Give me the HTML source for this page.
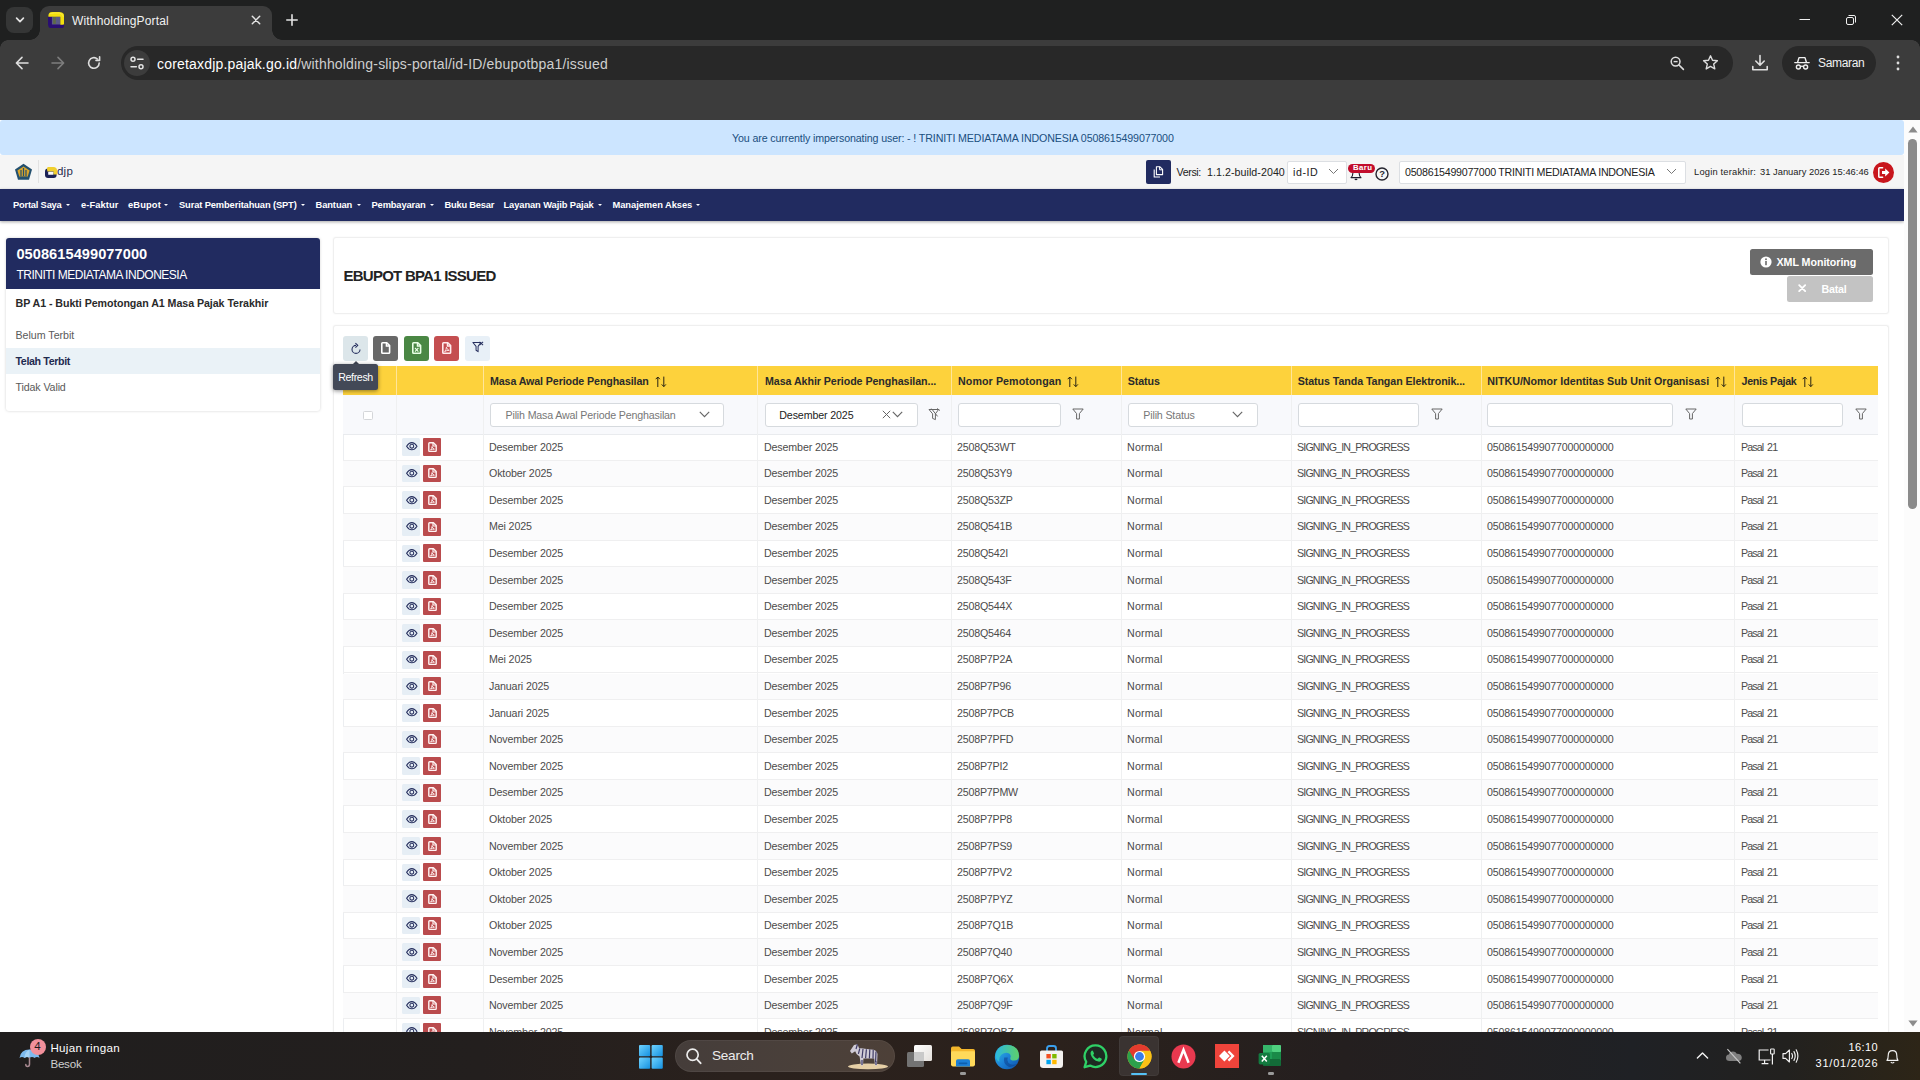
<!DOCTYPE html>
<html lang="id">
<head>
<meta charset="utf-8">
<title>WithholdingPortal</title>
<style>
*{box-sizing:border-box;margin:0;padding:0}
html,body{width:1920px;height:1080px;overflow:hidden;background:#fff}
body{font-family:"Liberation Sans",sans-serif;font-size:10.67px;color:#333;position:relative;-webkit-font-smoothing:antialiased}
.abs{position:absolute}
.t{position:absolute;white-space:nowrap;line-height:1}
svg{display:block}

/* ---------- browser chrome ---------- */
#tabstrip{left:0;top:0;width:1920px;height:40px;background:#1f2020}
#toolbar{left:0;top:40px;width:1920px;height:80px;background:#3c3c3c}
#tab{left:40px;top:6px;width:232px;height:34px;background:#3c3c3c;border-radius:9px 9px 0 0}
#tabl,#tabr{top:30px;width:10px;height:10px;background:radial-gradient(circle at 0 0,#1f2020 9.5px,#3c3c3c 10px)}
#tabl{left:30px}
#tabr{left:272px;background:radial-gradient(circle at 100% 0,#1f2020 9.5px,#3c3c3c 10px)}
#tabsearch{left:6px;top:7px;width:27px;height:26px;border-radius:8px;background:#353636}
#urlpill{left:121px;top:46px;width:1612px;height:34px;border-radius:17px;background:#282828}
#siteinfo{left:124px;top:50px;width:26px;height:26px;border-radius:13px;background:#3c3c3c}
#incog{left:1782px;top:46px;width:94px;height:34px;border-radius:17px;background:#282828}

/* ---------- page ---------- */
#page{left:0;top:120px;width:1904px;height:912px;background:#fff;overflow:hidden}
#vscroll{left:1904px;top:120px;width:16px;height:912px;background:#fcfcfc}
#banner{left:0;top:0;width:1904px;height:34.5px;background:#cce5ff;border-radius:3px}
#hdr{left:0;top:34.5px;width:1904px;height:34.5px;background:#f5f5f5}
#nav{left:0;top:68.8px;width:1904px;height:31.8px;background:#212b60;box-shadow:0 1px 3px rgba(0,0,0,.35)}
.nv{top:80.6px;color:#fff;font-size:9.33px;font-weight:bold}
.car{top:84px;width:0;height:0;border-left:2px solid transparent;border-right:2px solid transparent;border-top:2.4px solid #fff}

/* sidebar */
#side{left:6px;top:118px;width:314px;height:173px;background:#fff;border-radius:3px;box-shadow:0 0 3px rgba(0,0,0,.18)}
#sidehead{left:0;top:0;width:314px;height:50.7px;background:#212b60;border-radius:3px 3px 0 0}
#sidesel{left:0;top:110.2px;width:314px;height:26px;background:#eaf2f7}

/* main cards */
.card{background:#fff;border:1px solid #efefef;border-radius:3px;box-shadow:0 0 2px rgba(0,0,0,.06)}
#card1{left:333px;top:117px;width:1556px;height:77px}
#card2{left:333px;top:205px;width:1556px;height:760px;border-bottom:none}

/* table */
#thead{left:343px;top:246px;width:1535px;height:29.3px;background:#fdd23c}
#tfilter{left:343px;top:275.3px;width:1535px;height:39.3px;background:#f8f9fc;border-bottom:1px solid #e9ebee}
.vl{top:275px;width:1px;height:700px;background:#eff0f1}
.th{top:255.5px;font-size:10.67px;font-weight:bold;color:#2b2b2b}
.row{left:343px;width:1535px;height:26.59px;border-bottom:1px solid #efeff0}
.row.alt{background:#fbfbfc}
.c{position:absolute;top:7.5px;white-space:nowrap;line-height:1;font-size:10.67px;color:#4b4b4b}
.eb{left:59px;top:4px;width:18px;height:17.6px;background:#e6eef5;border-radius:1.5px}
.pb{left:80px;top:3.8px;width:18px;height:17.9px;background:#ba4b4d;border-radius:1px}
.ei{left:62.6px;top:8.2px;width:12px;height:9px}
.pi{left:84.6px;top:7.6px;width:9px;height:10.4px}
.inp{background:#fff;border:1px solid #d6dade;border-radius:3px;height:24px;top:283px}
.tb{top:216px;width:24.7px;height:24.7px;border-radius:3px}

.hl{top:246px;width:1px;height:29.3px;background:#ffe59a}
.srt{top:255.6px;width:12px;height:12px}
.chv{top:290.6px;width:11px;height:7px}
.fl{top:288px;width:12px;height:12px}
/* taskbar */
#taskbar{left:0;top:1032px;width:1920px;height:48px;background:linear-gradient(90deg,#201e1e 0%,#231f1e 25%,#2a211d 38%,#2b211c 55%,#241f1f 70%,#1f2125 85%,#22211f 93%,#2d2517 100%)}
</style>
</head>
<body>
<svg width="0" height="0" style="position:absolute"><defs>
<g id="sort"><path d="M2.8 11 V1 M0.7 3.2 L2.8 1 L4.9 3.2" fill="none" stroke="#2a2412" stroke-width="1"/><path d="M8.8 0.6 V10.6 M6.7 8.4 L8.8 10.6 L10.9 8.4" fill="none" stroke="#2a2412" stroke-width="1"/></g>
<g id="chev"><path d="M0.8 0.8 L5.5 5.6 L10.2 0.8" fill="none" stroke="#666" stroke-width="1.15"/></g>
<g id="funnel"><path d="M0.8 1 H11.2 L7.4 5.6 V11 H4.6 V5.6 Z" fill="none" stroke="#666" stroke-width="1" stroke-linejoin="round"/></g>
<g id="eye"><path d="M0.6 4.2 C2.4 1.4 4.4 0.6 5.8 0.6 C7.2 0.6 9.2 1.4 11 4.2 C9.2 7 7.2 7.8 5.8 7.8 C4.4 7.8 2.4 7 0.6 4.2 Z" fill="none" stroke="#27305f" stroke-width="1.05"/><circle cx="5.8" cy="4.2" r="1.9" fill="none" stroke="#27305f" stroke-width="1.05"/></g>
<g id="pdf"><path d="M1.6 0.8 H5.4 L8.2 3.6 V8.6 Q8.2 9.4 7.4 9.4 H1.6 Q0.8 9.4 0.8 8.6 V1.6 Q0.8 0.8 1.6 0.8 Z" fill="none" stroke="#fff3f3" stroke-width="1.4" stroke-linejoin="round"/><path d="M5 1 V4 H8" fill="none" stroke="#fff3f3" stroke-width="1.2"/><path d="M2.6 8 Q4 6.8 4 4.6 Q4.6 6.6 6.4 7.2 Q4.4 7 2.6 8" fill="none" stroke="#fff3f3" stroke-width="0.9"/></g>
</defs></svg>

<!-- ================= BROWSER CHROME ================= -->
<div id="tabstrip" class="abs"></div>
<div id="toolbar" class="abs"></div>
<div id="tabsearch" class="abs"></div>
<div class="abs" style="left:1912px;top:40px;width:8px;height:8px;background:radial-gradient(circle at 0 100%,#3c3c3c 7.5px,#1f2020 8px)"></div>
<div class="abs" style="left:0;top:40px;width:8px;height:8px;background:radial-gradient(circle at 100% 100%,#3c3c3c 7.5px,#1f2020 8px)"></div>
<div id="tabl" class="abs"></div><div id="tab" class="abs"></div><div id="tabr" class="abs"></div>
<div id="urlpill" class="abs"></div>
<div id="siteinfo" class="abs"></div>
<div id="incog" class="abs"></div>
<!-- tab search chevron -->
<svg class="abs" style="left:14px;top:14px" width="12" height="12" viewBox="0 0 12 12"><path d="M2.6 4.2 L6 7.6 L9.4 4.2" fill="none" stroke="#e3e3e3" stroke-width="1.7" stroke-linecap="round" stroke-linejoin="round"/></svg>
<!-- favicon -->
<svg class="abs" style="left:48px;top:11.6px" width="16.4" height="16.4" viewBox="0 0 16 16"><path d="M0 4 H16 V12 Q16 16 12 16 H4 Q0 16 0 12 Z" fill="#2a0e72"/><rect x="3.8" y="4.6" width="8" height="7.6" fill="#5b5a86"/><rect x="5" y="4.6" width="2.6" height="7" fill="#5f6b45"/><path d="M0.4 4.6 Q0 0 4 0 H11 Q16 0 16 5 V11 Q16 12.4 14.6 12.4 H12 V4.6 Z" fill="#f2e00e"/><path d="M2 1.6 Q6 0.6 11 1 Q14.6 1.4 15 5" fill="none" stroke="#fff27a" stroke-width=".8" opacity=".6"/></svg>
<div class="t" style="left:72px;top:15px;font-size:12px;color:#f1f1f1;letter-spacing:0.171px">WithholdingPortal</div>
<!-- tab close -->
<svg class="abs" style="left:251px;top:15px" width="10" height="10" viewBox="0 0 10 10"><path d="M1.3 1.3 L8.7 8.7 M8.7 1.3 L1.3 8.7" stroke="#e3e3e3" stroke-width="1.5" stroke-linecap="round"/></svg>
<!-- new tab plus -->
<svg class="abs" style="left:286px;top:14px" width="12" height="12" viewBox="0 0 12 12"><path d="M6 0.8 V11.2 M0.8 6 H11.2" stroke="#e3e3e3" stroke-width="1.6" stroke-linecap="round"/></svg>
<!-- window controls -->
<svg class="abs" style="left:1799px;top:14px" width="12" height="12" viewBox="0 0 12 12"><path d="M0.5 5.5 H11" stroke="#f0f0f0" stroke-width="1"/></svg>
<svg class="abs" style="left:1845px;top:14px" width="12" height="12" viewBox="0 0 12 12"><rect x="1.5" y="3.5" width="7" height="7" rx="1.5" fill="none" stroke="#f0f0f0" stroke-width="1"/><path d="M3.5 1.5 H9 Q10.5 1.5 10.5 3 V8.5" fill="none" stroke="#f0f0f0" stroke-width="1"/></svg>
<svg class="abs" style="left:1891px;top:14px" width="12" height="12" viewBox="0 0 12 12"><path d="M0.8 0.8 L11.2 11.2 M11.2 0.8 L0.8 11.2" stroke="#f0f0f0" stroke-width="1.2"/></svg>
<!-- back / forward / reload -->
<svg class="abs" style="left:14px;top:55px" width="16" height="16" viewBox="0 0 16 16"><path d="M14 8 H2.6 M8 2.4 L2.4 8 L8 13.6" fill="none" stroke="#dedede" stroke-width="1.6" stroke-linecap="round" stroke-linejoin="round"/></svg>
<svg class="abs" style="left:50px;top:55px" width="16" height="16" viewBox="0 0 16 16"><path d="M2 8 H13.4 M8 2.4 L13.6 8 L8 13.6" fill="none" stroke="#7d7d7d" stroke-width="1.6" stroke-linecap="round" stroke-linejoin="round"/></svg>
<svg class="abs" style="left:86px;top:55px" width="16" height="16" viewBox="0 0 16 16"><path d="M13.2 8 A5.3 5.3 0 1 1 11.4 4" fill="none" stroke="#dedede" stroke-width="1.6" stroke-linecap="round"/><path d="M13.6 1.8 V5.4 H10" fill="none" stroke="#dedede" stroke-width="1.6" stroke-linecap="round" stroke-linejoin="round"/></svg>
<!-- site info (tune) -->
<svg class="abs" style="left:129px;top:55px" width="16" height="16" viewBox="0 0 16 16"><circle cx="4" cy="4.3" r="2" fill="none" stroke="#e3e3e3" stroke-width="1.5"/><path d="M8.6 4.3 H14" stroke="#e3e3e3" stroke-width="1.5" stroke-linecap="round"/><circle cx="12" cy="11.7" r="2" fill="none" stroke="#e3e3e3" stroke-width="1.5"/><path d="M2 11.7 H7.4" stroke="#e3e3e3" stroke-width="1.5" stroke-linecap="round"/></svg>
<div class="t" id="url" style="left:157px;top:56.5px;font-size:14px;color:#cfcfcf;letter-spacing:0.181px"><span style="color:#fff">coretaxdjp.pajak.go.id</span>/withholding-slips-portal/id-ID/ebupotbpa1/issued</div>
<!-- zoom -->
<svg class="abs" style="left:1669px;top:55px" width="16" height="16" viewBox="0 0 16 16"><circle cx="6.6" cy="6.6" r="4.4" fill="none" stroke="#dedede" stroke-width="1.5"/><path d="M10 10 L14.4 14.4" stroke="#dedede" stroke-width="1.6" stroke-linecap="round"/><path d="M4.6 6.6 H8.6" stroke="#dedede" stroke-width="1.4"/></svg>
<!-- star -->
<svg class="abs" style="left:1702px;top:54px" width="17" height="17" viewBox="0 0 17 17"><path d="M8.5 1.8 L10.5 6.3 L15.4 6.8 L11.7 10.1 L12.8 14.9 L8.5 12.4 L4.2 14.9 L5.3 10.1 L1.6 6.8 L6.5 6.3 Z" fill="none" stroke="#dedede" stroke-width="1.4" stroke-linejoin="round"/></svg>
<!-- download -->
<svg class="abs" style="left:1751px;top:54px" width="18" height="18" viewBox="0 0 18 18"><path d="M9 1.5 V11 M4.8 7 L9 11.2 L13.2 7" fill="none" stroke="#dedede" stroke-width="1.6" stroke-linecap="round" stroke-linejoin="round"/><path d="M1.8 12.5 V15.8 H16.2 V12.5" fill="none" stroke="#dedede" stroke-width="1.6" stroke-linejoin="round" stroke-linecap="round"/></svg>
<!-- incognito -->
<svg class="abs" style="left:1794px;top:55px" width="16" height="16" viewBox="0 0 16 16"><path d="M0.8 7.6 H15.2" stroke="#f0f0f0" stroke-width="1.4" stroke-linecap="round"/><path d="M3.6 7.2 L5 2.6 H11 L12.4 7.2" fill="none" stroke="#f0f0f0" stroke-width="1.4" stroke-linejoin="round"/><circle cx="4.4" cy="12" r="2" fill="none" stroke="#f0f0f0" stroke-width="1.4"/><circle cx="11.6" cy="12" r="2" fill="none" stroke="#f0f0f0" stroke-width="1.4"/><path d="M6.4 11.6 Q8 10.6 9.6 11.6" fill="none" stroke="#f0f0f0" stroke-width="1.3"/></svg>
<div class="t" style="left:1818px;top:56.5px;font-size:12px;color:#f1f1f1;letter-spacing:-0.317px">Samaran</div>
<!-- menu dots -->
<svg class="abs" style="left:1895px;top:54px" width="6" height="18" viewBox="0 0 6 18"><circle cx="3" cy="3" r="1.4" fill="#dedede"/><circle cx="3" cy="9" r="1.4" fill="#dedede"/><circle cx="3" cy="15" r="1.4" fill="#dedede"/></svg>


<!-- ================= PAGE ================= -->
<div id="page" class="abs">
<div id="banner" class="abs"></div>
<div id="hdr" class="abs"></div>
<div id="nav" class="abs"></div>
<div class="t" style="left:732px;top:12.5px;font-size:10.67px;color:#1a4f80;letter-spacing:-0.121px">You are currently impersonating user: - ! TRINITI MEDIATAMA INDONESIA 0508615499077000</div>
<!-- kemenkeu logo -->
<svg class="abs" style="left:14px;top:43px" width="19" height="18" viewBox="0 0 19 18"><path d="M9.5 0.8 L18 6.6 L15 16.8 H4 L1 6.6 Z" fill="#23506f"/><path d="M9.5 3.4 L15.6 7.5 L13.4 14.6 H5.6 L3.4 7.5 Z" fill="#d9a52c"/><path d="M9.5 5 V13 M7 7 V13 M12 7 V13" stroke="#23506f" stroke-width="1.2"/><rect x="5.4" y="13.4" width="8.2" height="1.6" fill="#23506f"/></svg>
<div class="abs" style="left:38px;top:40px;width:1px;height:23px;background:#e2e2e2"></div>
<!-- djp logo -->
<svg class="abs" style="left:44.8px;top:46.8px" width="12" height="11" viewBox="0 0 12 11"><rect x="0" y="1.4" width="11.6" height="9.6" rx="3" fill="#1b2256"/><path d="M2.6 0 H8.4 Q12 0 12 3.6 V7.6 H8.4 V4.6 H2.4 Q1.4 2 2.6 0 Z" fill="#f0cf2e"/><rect x="3.2" y="4.7" width="5.1" height="3.1" rx=".6" fill="#fbfbfb"/></svg>
<div class="t" style="left:57px;top:46px;font-size:11.5px;color:#272b50;letter-spacing:0.220px">djp</div>
<!-- right side -->
<div class="abs" style="left:1146px;top:40px;width:25px;height:23.5px;border-radius:2px;background:#212b60"></div>
<svg class="abs" style="left:1153px;top:46px" width="11" height="12" viewBox="0 0 11 12"><path d="M3.4 0.8 H7 L9.6 3.4 V8.6 H3.4 Z" fill="none" stroke="#fff" stroke-width="1.1" stroke-linejoin="round"/><path d="M6.6 0.8 V3.8 H9.6" fill="none" stroke="#fff" stroke-width="1"/><path d="M1.2 3.6 V11 H7" fill="none" stroke="#fff" stroke-width="1.1" stroke-linejoin="round"/></svg>
<div class="t" style="left:1176.5px;top:46.5px;font-size:10.67px;color:#222;letter-spacing:-0.371px">Versi:</div>
<div class="t" style="left:1207px;top:46.5px;font-size:10.67px;color:#222;letter-spacing:0.051px">1.1.2-build-2040</div>
<div class="abs" style="left:1287px;top:40.5px;width:60px;height:23px;border:1px solid #dcdfe3;border-radius:2px;background:#fff"></div>
<div class="t" style="left:1293px;top:46.5px;font-size:10.67px;color:#222;letter-spacing:0.575px">id-ID</div>
<svg class="abs" style="left:1328px;top:48px" width="11" height="7" viewBox="0 0 11 7"><path d="M1 1 L5.5 5.5 L10 1" fill="none" stroke="#777" stroke-width="1"/></svg>
<!-- bell + badge -->
<svg class="abs" style="left:1350.4px;top:48px" width="12" height="13" viewBox="0 0 12 13"><path d="M1 9.6 Q2.8 8 2.8 5.5 Q2.8 2.6 6 2.6 Q9.2 2.6 9.2 5.5 Q9.2 8 11 9.6 Z" fill="none" stroke="#1d1d2c" stroke-width="1.1" stroke-linejoin="round"/><path d="M4.8 11 Q6 12.2 7.2 11" fill="none" stroke="#1d1d2c" stroke-width="1.1"/></svg>
<div class="abs" style="left:1348.3px;top:43.8px;width:26.8px;height:9.4px;border-radius:4.7px;background:#c20d2c"></div>
<div class="t" style="left:1353px;top:44px;font-size:7.8px;font-weight:bold;color:#fff;letter-spacing:0.411px">Baru</div>
<svg class="abs" style="left:1375px;top:46.7px" width="14" height="14" viewBox="0 0 14 14"><circle cx="7" cy="7" r="6" fill="none" stroke="#25252f" stroke-width="1.4"/></svg>
<div class="t" style="left:1379.3px;top:49px;font-size:9.4px;font-weight:bold;color:#25252f">?</div>
<div class="abs" style="left:1399px;top:40.5px;width:287px;height:23px;border:1px solid #dcdfe3;border-radius:2px;background:#fff"></div>
<div class="t" style="left:1405px;top:46.5px;font-size:10.67px;color:#222;letter-spacing:-0.251px">0508615499077000 TRINITI MEDIATAMA INDONESIA</div>
<svg class="abs" style="left:1666px;top:48px" width="11" height="7" viewBox="0 0 11 7"><path d="M1 1 L5.5 5.5 L10 1" fill="none" stroke="#777" stroke-width="1"/></svg>
<div class="t" style="left:1694px;top:47.5px;font-size:9.33px;color:#222;letter-spacing:0.191px">Login terakhir:</div>
<div class="t" style="left:1760px;top:47.5px;font-size:9.33px;color:#222;letter-spacing:0.017px">31 January 2026 15:46:46</div>
<div class="abs" style="left:1873px;top:41.5px;width:21px;height:21px;border-radius:50%;background:#c8161d"></div>
<svg class="abs" style="left:1878px;top:46.5px" width="12" height="11" viewBox="0 0 12 11"><path d="M4.6 0.8 H1.6 Q0.8 0.8 0.8 1.6 V9.4 Q0.8 10.2 1.6 10.2 H4.6" fill="none" stroke="#fff" stroke-width="1.5" stroke-linecap="round"/><path d="M4 4 H7.2 V1.6 L11.4 5.5 L7.2 9.4 V7 H4 Z" fill="#fff"/></svg>
<!-- nav -->
<div class="t nv" style="left:13px;letter-spacing:-0.203px">Portal Saya</div><div class="abs car" style="left:66px"></div>
<div class="t nv" style="left:81px;letter-spacing:0.070px">e-Faktur</div>
<div class="t nv" style="left:128px;letter-spacing:0.135px">eBupot</div><div class="abs car" style="left:164px"></div>
<div class="t nv" style="left:179px;letter-spacing:-0.124px">Surat Pemberitahuan (SPT)</div><div class="abs car" style="left:300.5px"></div>
<div class="t nv" style="left:315.5px;letter-spacing:-0.088px">Bantuan</div><div class="abs car" style="left:356.5px"></div>
<div class="t nv" style="left:371.5px;letter-spacing:-0.132px">Pembayaran</div><div class="abs car" style="left:430px"></div>
<div class="t nv" style="left:444.5px;letter-spacing:-0.227px">Buku Besar</div>
<div class="t nv" style="left:503.5px;letter-spacing:-0.091px">Layanan Wajib Pajak</div><div class="abs car" style="left:598px"></div>
<div class="t nv" style="left:612.5px;letter-spacing:-0.053px">Manajemen Akses</div><div class="abs car" style="left:696px"></div>

<div id="side" class="abs">
<div id="sidehead" class="abs"></div>
<div id="sidesel" class="abs"></div>
<div class="t" style="left:10.4px;top:9px;font-size:14.6px;font-weight:bold;color:#fff;letter-spacing:0.062px">0508615499077000</div>
<div class="t" style="left:10.4px;top:30.5px;font-size:12px;color:#fff;letter-spacing:-0.491px">TRINITI MEDIATAMA INDONESIA</div>
<div class="t" style="left:9.5px;top:59.7px;font-size:10.67px;font-weight:bold;color:#2a2a2a;letter-spacing:-0.053px">BP A1 - Bukti Pemotongan A1 Masa Pajak Terakhir</div>
<div class="t" style="left:9.5px;top:92px;font-size:10.67px;color:#5a5a5a;letter-spacing:-0.021px">Belum Terbit</div>
<div class="t" style="left:9.5px;top:118.3px;font-size:10.67px;font-weight:bold;color:#1f2a4f;letter-spacing:-0.365px">Telah Terbit</div>
<div class="t" style="left:9.5px;top:144px;font-size:10.67px;color:#5a5a5a;letter-spacing:-0.123px">Tidak Valid</div>
</div>

<div id="card1" class="abs card"></div>
<div id="card2" class="abs card"></div>
<div class="t" style="left:343.5px;top:147.6px;font-size:15px;font-weight:bold;color:#232323;letter-spacing:-0.753px">EBUPOT BPA1 ISSUED</div>
<!-- XML Monitoring / Batal -->
<div class="abs" style="left:1750px;top:129.3px;width:122.7px;height:25.4px;border-radius:2.5px;background:#6b6b6b"></div>
<svg class="abs" style="left:1759.5px;top:136.3px" width="12" height="12" viewBox="0 0 12 12"><circle cx="6" cy="6" r="5.6" fill="#fff"/><rect x="5.2" y="5" width="1.6" height="4.2" fill="#6b6b6b"/><circle cx="6" cy="3.3" r="0.95" fill="#6b6b6b"/></svg>
<div class="t" style="left:1776.5px;top:137px;font-size:10.67px;font-weight:bold;color:#fff;letter-spacing:-0.039px">XML Monitoring</div>
<div class="abs" style="left:1787.3px;top:156px;width:85.4px;height:26.2px;border-radius:2.5px;background:#c3c3c3"></div>
<svg class="abs" style="left:1798px;top:163.8px" width="8.4" height="8.4" viewBox="0 0 9 9"><path d="M1.3 1.3 L7.7 7.7 M7.7 1.3 L1.3 7.7" stroke="#fff" stroke-width="2" stroke-linecap="round"/></svg>
<div class="t" style="left:1821.5px;top:163.7px;font-size:10.67px;font-weight:bold;color:#fff;letter-spacing:-0.191px">Batal</div>

<!-- toolbar buttons -->
<div class="abs tb" style="left:343.1px;background:#dce6ea"></div>
<svg class="abs" style="left:349.6px;top:222px" width="12" height="13" viewBox="0 0 12 13"><path d="M10 7.4 A4 4 0 1 1 6 3.4" fill="none" stroke="#27305f" stroke-width="1.1"/><path d="M5.4 1.2 L7.8 3.4 L5.4 5.6" fill="none" stroke="#27305f" stroke-width="1.1" stroke-linejoin="round"/></svg>
<div class="abs tb" style="left:373.1px;background:#686868"></div>
<svg class="abs" style="left:380.6px;top:221.5px" width="10" height="12" viewBox="0 0 10 12"><path d="M1.6 0.8 H5.8 L8.6 3.6 V10.4 Q8.6 11.2 7.8 11.2 H1.6 Q0.8 11.2 0.8 10.4 V1.6 Q0.8 0.8 1.6 0.8 Z" fill="none" stroke="#fff" stroke-width="1.6" stroke-linejoin="round"/><path d="M5.4 1 V4 H8.4" fill="none" stroke="#fff" stroke-width="1.4"/></svg>
<div class="abs tb" style="left:404.2px;background:#4a8744"></div>
<svg class="abs" style="left:411.6px;top:221.5px" width="10" height="12" viewBox="0 0 10 12"><path d="M1.6 0.8 H5.8 L8.6 3.6 V10.4 Q8.6 11.2 7.8 11.2 H1.6 Q0.8 11.2 0.8 10.4 V1.6 Q0.8 0.8 1.6 0.8 Z" fill="none" stroke="#e9ffe6" stroke-width="1.6" stroke-linejoin="round"/><path d="M5.4 1 V4 H8.4" fill="none" stroke="#e9ffe6" stroke-width="1.3"/><path d="M3 6 L6.4 9.6 M6.4 6 L3 9.6" stroke="#e9ffe6" stroke-width="1.1"/></svg>
<div class="abs tb" style="left:434.2px;background:#c44e50"></div>
<svg class="abs" style="left:441.6px;top:221.5px" width="10" height="12" viewBox="0 0 10 12"><path d="M1.6 0.8 H5.8 L8.6 3.6 V10.4 Q8.6 11.2 7.8 11.2 H1.6 Q0.8 11.2 0.8 10.4 V1.6 Q0.8 0.8 1.6 0.8 Z" fill="none" stroke="#ffecec" stroke-width="1.6" stroke-linejoin="round"/><path d="M5.4 1 V4 H8.4" fill="none" stroke="#ffecec" stroke-width="1.3"/><path d="M2.6 9.6 Q4.4 8 4.4 5.2 Q5 7.6 7.2 8.4 Q4.8 8.2 2.6 9.6" fill="none" stroke="#ffecec" stroke-width="0.9"/></svg>
<div class="abs tb" style="left:465px;background:#e8f0f7"></div>
<svg class="abs" style="left:471.6px;top:221.2px" width="12" height="12" viewBox="0 0 13 13"><path d="M1 1.6 H9.6 L6.6 5.8 V11.6 L4.4 10 V5.8 Z" fill="none" stroke="#27305f" stroke-width="1.1" stroke-linejoin="round"/><path d="M8.2 1 L12 4.4 M12 1 L8.2 4.4" stroke="#27305f" stroke-width="1.1"/></svg>

<!-- table header -->
<div id="thead" class="abs"></div>
<div class="abs" style="left:343px;top:275px;width:1px;height:700px;background:#eceef1"></div>
<div id="tfilter" class="abs"></div>
<div class="abs row" style="top:314.20px"><div class="abs eb"></div><svg class="abs ei"><use href="#eye"/></svg><div class="abs pb"></div><svg class="abs pi"><use href="#pdf"/></svg><div class="c" style="left:146px;letter-spacing:-0.127px">Desember 2025</div><div class="c" style="left:614px;letter-spacing:-0.203px">2508Q53WT</div><div class="c" style="left:421px;letter-spacing:-0.127px">Desember 2025</div><div class="c" style="left:784px;letter-spacing:0.191px">Normal</div><div class="c" style="left:954px;letter-spacing:-0.839px">SIGNING_IN_PROGRESS</div><div class="c" style="left:1144px;letter-spacing:-0.171px">0508615499077000000000</div><div class="c" style="left:1398px;word-spacing:1.6px;letter-spacing:-0.854px">Pasal 21</div></div>
<div class="abs row alt" style="top:340.79px"><div class="abs eb"></div><svg class="abs ei"><use href="#eye"/></svg><div class="abs pb"></div><svg class="abs pi"><use href="#pdf"/></svg><div class="c" style="left:146px;letter-spacing:-0.127px">Oktober 2025</div><div class="c" style="left:614px;letter-spacing:-0.203px">2508Q53Y9</div><div class="c" style="left:421px;letter-spacing:-0.127px">Desember 2025</div><div class="c" style="left:784px;letter-spacing:0.191px">Normal</div><div class="c" style="left:954px;letter-spacing:-0.839px">SIGNING_IN_PROGRESS</div><div class="c" style="left:1144px;letter-spacing:-0.171px">0508615499077000000000</div><div class="c" style="left:1398px;word-spacing:1.6px;letter-spacing:-0.854px">Pasal 21</div></div>
<div class="abs row" style="top:367.38px"><div class="abs eb"></div><svg class="abs ei"><use href="#eye"/></svg><div class="abs pb"></div><svg class="abs pi"><use href="#pdf"/></svg><div class="c" style="left:146px;letter-spacing:-0.127px">Desember 2025</div><div class="c" style="left:614px;letter-spacing:-0.203px">2508Q53ZP</div><div class="c" style="left:421px;letter-spacing:-0.127px">Desember 2025</div><div class="c" style="left:784px;letter-spacing:0.191px">Normal</div><div class="c" style="left:954px;letter-spacing:-0.839px">SIGNING_IN_PROGRESS</div><div class="c" style="left:1144px;letter-spacing:-0.171px">0508615499077000000000</div><div class="c" style="left:1398px;word-spacing:1.6px;letter-spacing:-0.854px">Pasal 21</div></div>
<div class="abs row alt" style="top:393.97px"><div class="abs eb"></div><svg class="abs ei"><use href="#eye"/></svg><div class="abs pb"></div><svg class="abs pi"><use href="#pdf"/></svg><div class="c" style="left:146px;letter-spacing:-0.127px">Mei 2025</div><div class="c" style="left:614px;letter-spacing:-0.203px">2508Q541B</div><div class="c" style="left:421px;letter-spacing:-0.127px">Desember 2025</div><div class="c" style="left:784px;letter-spacing:0.191px">Normal</div><div class="c" style="left:954px;letter-spacing:-0.839px">SIGNING_IN_PROGRESS</div><div class="c" style="left:1144px;letter-spacing:-0.171px">0508615499077000000000</div><div class="c" style="left:1398px;word-spacing:1.6px;letter-spacing:-0.854px">Pasal 21</div></div>
<div class="abs row" style="top:420.56px"><div class="abs eb"></div><svg class="abs ei"><use href="#eye"/></svg><div class="abs pb"></div><svg class="abs pi"><use href="#pdf"/></svg><div class="c" style="left:146px;letter-spacing:-0.127px">Desember 2025</div><div class="c" style="left:614px;letter-spacing:-0.203px">2508Q542I</div><div class="c" style="left:421px;letter-spacing:-0.127px">Desember 2025</div><div class="c" style="left:784px;letter-spacing:0.191px">Normal</div><div class="c" style="left:954px;letter-spacing:-0.839px">SIGNING_IN_PROGRESS</div><div class="c" style="left:1144px;letter-spacing:-0.171px">0508615499077000000000</div><div class="c" style="left:1398px;word-spacing:1.6px;letter-spacing:-0.854px">Pasal 21</div></div>
<div class="abs row alt" style="top:447.15px"><div class="abs eb"></div><svg class="abs ei"><use href="#eye"/></svg><div class="abs pb"></div><svg class="abs pi"><use href="#pdf"/></svg><div class="c" style="left:146px;letter-spacing:-0.127px">Desember 2025</div><div class="c" style="left:614px;letter-spacing:-0.203px">2508Q543F</div><div class="c" style="left:421px;letter-spacing:-0.127px">Desember 2025</div><div class="c" style="left:784px;letter-spacing:0.191px">Normal</div><div class="c" style="left:954px;letter-spacing:-0.839px">SIGNING_IN_PROGRESS</div><div class="c" style="left:1144px;letter-spacing:-0.171px">0508615499077000000000</div><div class="c" style="left:1398px;word-spacing:1.6px;letter-spacing:-0.854px">Pasal 21</div></div>
<div class="abs row" style="top:473.74px"><div class="abs eb"></div><svg class="abs ei"><use href="#eye"/></svg><div class="abs pb"></div><svg class="abs pi"><use href="#pdf"/></svg><div class="c" style="left:146px;letter-spacing:-0.127px">Desember 2025</div><div class="c" style="left:614px;letter-spacing:-0.203px">2508Q544X</div><div class="c" style="left:421px;letter-spacing:-0.127px">Desember 2025</div><div class="c" style="left:784px;letter-spacing:0.191px">Normal</div><div class="c" style="left:954px;letter-spacing:-0.839px">SIGNING_IN_PROGRESS</div><div class="c" style="left:1144px;letter-spacing:-0.171px">0508615499077000000000</div><div class="c" style="left:1398px;word-spacing:1.6px;letter-spacing:-0.854px">Pasal 21</div></div>
<div class="abs row alt" style="top:500.33px"><div class="abs eb"></div><svg class="abs ei"><use href="#eye"/></svg><div class="abs pb"></div><svg class="abs pi"><use href="#pdf"/></svg><div class="c" style="left:146px;letter-spacing:-0.127px">Desember 2025</div><div class="c" style="left:614px;letter-spacing:-0.203px">2508Q5464</div><div class="c" style="left:421px;letter-spacing:-0.127px">Desember 2025</div><div class="c" style="left:784px;letter-spacing:0.191px">Normal</div><div class="c" style="left:954px;letter-spacing:-0.839px">SIGNING_IN_PROGRESS</div><div class="c" style="left:1144px;letter-spacing:-0.171px">0508615499077000000000</div><div class="c" style="left:1398px;word-spacing:1.6px;letter-spacing:-0.854px">Pasal 21</div></div>
<div class="abs row" style="top:526.92px"><div class="abs eb"></div><svg class="abs ei"><use href="#eye"/></svg><div class="abs pb"></div><svg class="abs pi"><use href="#pdf"/></svg><div class="c" style="left:146px;letter-spacing:-0.127px">Mei 2025</div><div class="c" style="left:614px;letter-spacing:-0.203px">2508P7P2A</div><div class="c" style="left:421px;letter-spacing:-0.127px">Desember 2025</div><div class="c" style="left:784px;letter-spacing:0.191px">Normal</div><div class="c" style="left:954px;letter-spacing:-0.839px">SIGNING_IN_PROGRESS</div><div class="c" style="left:1144px;letter-spacing:-0.171px">0508615499077000000000</div><div class="c" style="left:1398px;word-spacing:1.6px;letter-spacing:-0.854px">Pasal 21</div></div>
<div class="abs row alt" style="top:553.51px"><div class="abs eb"></div><svg class="abs ei"><use href="#eye"/></svg><div class="abs pb"></div><svg class="abs pi"><use href="#pdf"/></svg><div class="c" style="left:146px;letter-spacing:-0.127px">Januari 2025</div><div class="c" style="left:614px;letter-spacing:-0.203px">2508P7P96</div><div class="c" style="left:421px;letter-spacing:-0.127px">Desember 2025</div><div class="c" style="left:784px;letter-spacing:0.191px">Normal</div><div class="c" style="left:954px;letter-spacing:-0.839px">SIGNING_IN_PROGRESS</div><div class="c" style="left:1144px;letter-spacing:-0.171px">0508615499077000000000</div><div class="c" style="left:1398px;word-spacing:1.6px;letter-spacing:-0.854px">Pasal 21</div></div>
<div class="abs row" style="top:580.10px"><div class="abs eb"></div><svg class="abs ei"><use href="#eye"/></svg><div class="abs pb"></div><svg class="abs pi"><use href="#pdf"/></svg><div class="c" style="left:146px;letter-spacing:-0.127px">Januari 2025</div><div class="c" style="left:614px;letter-spacing:-0.203px">2508P7PCB</div><div class="c" style="left:421px;letter-spacing:-0.127px">Desember 2025</div><div class="c" style="left:784px;letter-spacing:0.191px">Normal</div><div class="c" style="left:954px;letter-spacing:-0.839px">SIGNING_IN_PROGRESS</div><div class="c" style="left:1144px;letter-spacing:-0.171px">0508615499077000000000</div><div class="c" style="left:1398px;word-spacing:1.6px;letter-spacing:-0.854px">Pasal 21</div></div>
<div class="abs row alt" style="top:606.69px"><div class="abs eb"></div><svg class="abs ei"><use href="#eye"/></svg><div class="abs pb"></div><svg class="abs pi"><use href="#pdf"/></svg><div class="c" style="left:146px;letter-spacing:-0.127px">November 2025</div><div class="c" style="left:614px;letter-spacing:-0.203px">2508P7PFD</div><div class="c" style="left:421px;letter-spacing:-0.127px">Desember 2025</div><div class="c" style="left:784px;letter-spacing:0.191px">Normal</div><div class="c" style="left:954px;letter-spacing:-0.839px">SIGNING_IN_PROGRESS</div><div class="c" style="left:1144px;letter-spacing:-0.171px">0508615499077000000000</div><div class="c" style="left:1398px;word-spacing:1.6px;letter-spacing:-0.854px">Pasal 21</div></div>
<div class="abs row" style="top:633.28px"><div class="abs eb"></div><svg class="abs ei"><use href="#eye"/></svg><div class="abs pb"></div><svg class="abs pi"><use href="#pdf"/></svg><div class="c" style="left:146px;letter-spacing:-0.127px">November 2025</div><div class="c" style="left:614px;letter-spacing:-0.203px">2508P7PI2</div><div class="c" style="left:421px;letter-spacing:-0.127px">Desember 2025</div><div class="c" style="left:784px;letter-spacing:0.191px">Normal</div><div class="c" style="left:954px;letter-spacing:-0.839px">SIGNING_IN_PROGRESS</div><div class="c" style="left:1144px;letter-spacing:-0.171px">0508615499077000000000</div><div class="c" style="left:1398px;word-spacing:1.6px;letter-spacing:-0.854px">Pasal 21</div></div>
<div class="abs row alt" style="top:659.87px"><div class="abs eb"></div><svg class="abs ei"><use href="#eye"/></svg><div class="abs pb"></div><svg class="abs pi"><use href="#pdf"/></svg><div class="c" style="left:146px;letter-spacing:-0.127px">Desember 2025</div><div class="c" style="left:614px;letter-spacing:-0.203px">2508P7PMW</div><div class="c" style="left:421px;letter-spacing:-0.127px">Desember 2025</div><div class="c" style="left:784px;letter-spacing:0.191px">Normal</div><div class="c" style="left:954px;letter-spacing:-0.839px">SIGNING_IN_PROGRESS</div><div class="c" style="left:1144px;letter-spacing:-0.171px">0508615499077000000000</div><div class="c" style="left:1398px;word-spacing:1.6px;letter-spacing:-0.854px">Pasal 21</div></div>
<div class="abs row" style="top:686.46px"><div class="abs eb"></div><svg class="abs ei"><use href="#eye"/></svg><div class="abs pb"></div><svg class="abs pi"><use href="#pdf"/></svg><div class="c" style="left:146px;letter-spacing:-0.127px">Oktober 2025</div><div class="c" style="left:614px;letter-spacing:-0.203px">2508P7PP8</div><div class="c" style="left:421px;letter-spacing:-0.127px">Desember 2025</div><div class="c" style="left:784px;letter-spacing:0.191px">Normal</div><div class="c" style="left:954px;letter-spacing:-0.839px">SIGNING_IN_PROGRESS</div><div class="c" style="left:1144px;letter-spacing:-0.171px">0508615499077000000000</div><div class="c" style="left:1398px;word-spacing:1.6px;letter-spacing:-0.854px">Pasal 21</div></div>
<div class="abs row alt" style="top:713.05px"><div class="abs eb"></div><svg class="abs ei"><use href="#eye"/></svg><div class="abs pb"></div><svg class="abs pi"><use href="#pdf"/></svg><div class="c" style="left:146px;letter-spacing:-0.127px">November 2025</div><div class="c" style="left:614px;letter-spacing:-0.203px">2508P7PS9</div><div class="c" style="left:421px;letter-spacing:-0.127px">Desember 2025</div><div class="c" style="left:784px;letter-spacing:0.191px">Normal</div><div class="c" style="left:954px;letter-spacing:-0.839px">SIGNING_IN_PROGRESS</div><div class="c" style="left:1144px;letter-spacing:-0.171px">0508615499077000000000</div><div class="c" style="left:1398px;word-spacing:1.6px;letter-spacing:-0.854px">Pasal 21</div></div>
<div class="abs row" style="top:739.64px"><div class="abs eb"></div><svg class="abs ei"><use href="#eye"/></svg><div class="abs pb"></div><svg class="abs pi"><use href="#pdf"/></svg><div class="c" style="left:146px;letter-spacing:-0.127px">Oktober 2025</div><div class="c" style="left:614px;letter-spacing:-0.203px">2508P7PV2</div><div class="c" style="left:421px;letter-spacing:-0.127px">Desember 2025</div><div class="c" style="left:784px;letter-spacing:0.191px">Normal</div><div class="c" style="left:954px;letter-spacing:-0.839px">SIGNING_IN_PROGRESS</div><div class="c" style="left:1144px;letter-spacing:-0.171px">0508615499077000000000</div><div class="c" style="left:1398px;word-spacing:1.6px;letter-spacing:-0.854px">Pasal 21</div></div>
<div class="abs row alt" style="top:766.23px"><div class="abs eb"></div><svg class="abs ei"><use href="#eye"/></svg><div class="abs pb"></div><svg class="abs pi"><use href="#pdf"/></svg><div class="c" style="left:146px;letter-spacing:-0.127px">Oktober 2025</div><div class="c" style="left:614px;letter-spacing:-0.203px">2508P7PYZ</div><div class="c" style="left:421px;letter-spacing:-0.127px">Desember 2025</div><div class="c" style="left:784px;letter-spacing:0.191px">Normal</div><div class="c" style="left:954px;letter-spacing:-0.839px">SIGNING_IN_PROGRESS</div><div class="c" style="left:1144px;letter-spacing:-0.171px">0508615499077000000000</div><div class="c" style="left:1398px;word-spacing:1.6px;letter-spacing:-0.854px">Pasal 21</div></div>
<div class="abs row" style="top:792.82px"><div class="abs eb"></div><svg class="abs ei"><use href="#eye"/></svg><div class="abs pb"></div><svg class="abs pi"><use href="#pdf"/></svg><div class="c" style="left:146px;letter-spacing:-0.127px">Oktober 2025</div><div class="c" style="left:614px;letter-spacing:-0.203px">2508P7Q1B</div><div class="c" style="left:421px;letter-spacing:-0.127px">Desember 2025</div><div class="c" style="left:784px;letter-spacing:0.191px">Normal</div><div class="c" style="left:954px;letter-spacing:-0.839px">SIGNING_IN_PROGRESS</div><div class="c" style="left:1144px;letter-spacing:-0.171px">0508615499077000000000</div><div class="c" style="left:1398px;word-spacing:1.6px;letter-spacing:-0.854px">Pasal 21</div></div>
<div class="abs row alt" style="top:819.41px"><div class="abs eb"></div><svg class="abs ei"><use href="#eye"/></svg><div class="abs pb"></div><svg class="abs pi"><use href="#pdf"/></svg><div class="c" style="left:146px;letter-spacing:-0.127px">November 2025</div><div class="c" style="left:614px;letter-spacing:-0.203px">2508P7Q40</div><div class="c" style="left:421px;letter-spacing:-0.127px">Desember 2025</div><div class="c" style="left:784px;letter-spacing:0.191px">Normal</div><div class="c" style="left:954px;letter-spacing:-0.839px">SIGNING_IN_PROGRESS</div><div class="c" style="left:1144px;letter-spacing:-0.171px">0508615499077000000000</div><div class="c" style="left:1398px;word-spacing:1.6px;letter-spacing:-0.854px">Pasal 21</div></div>
<div class="abs row" style="top:846.00px"><div class="abs eb"></div><svg class="abs ei"><use href="#eye"/></svg><div class="abs pb"></div><svg class="abs pi"><use href="#pdf"/></svg><div class="c" style="left:146px;letter-spacing:-0.127px">Desember 2025</div><div class="c" style="left:614px;letter-spacing:-0.203px">2508P7Q6X</div><div class="c" style="left:421px;letter-spacing:-0.127px">Desember 2025</div><div class="c" style="left:784px;letter-spacing:0.191px">Normal</div><div class="c" style="left:954px;letter-spacing:-0.839px">SIGNING_IN_PROGRESS</div><div class="c" style="left:1144px;letter-spacing:-0.171px">0508615499077000000000</div><div class="c" style="left:1398px;word-spacing:1.6px;letter-spacing:-0.854px">Pasal 21</div></div>
<div class="abs row alt" style="top:872.59px"><div class="abs eb"></div><svg class="abs ei"><use href="#eye"/></svg><div class="abs pb"></div><svg class="abs pi"><use href="#pdf"/></svg><div class="c" style="left:146px;letter-spacing:-0.127px">November 2025</div><div class="c" style="left:614px;letter-spacing:-0.203px">2508P7Q9F</div><div class="c" style="left:421px;letter-spacing:-0.127px">Desember 2025</div><div class="c" style="left:784px;letter-spacing:0.191px">Normal</div><div class="c" style="left:954px;letter-spacing:-0.839px">SIGNING_IN_PROGRESS</div><div class="c" style="left:1144px;letter-spacing:-0.171px">0508615499077000000000</div><div class="c" style="left:1398px;word-spacing:1.6px;letter-spacing:-0.854px">Pasal 21</div></div>
<div class="abs row" style="top:899.18px"><div class="abs eb"></div><svg class="abs ei"><use href="#eye"/></svg><div class="abs pb"></div><svg class="abs pi"><use href="#pdf"/></svg><div class="c" style="left:146px;letter-spacing:-0.127px">November 2025</div><div class="c" style="left:614px;letter-spacing:-0.203px">2508P7QBZ</div><div class="c" style="left:421px;letter-spacing:-0.127px">Desember 2025</div><div class="c" style="left:784px;letter-spacing:0.191px">Normal</div><div class="c" style="left:954px;letter-spacing:-0.839px">SIGNING_IN_PROGRESS</div><div class="c" style="left:1144px;letter-spacing:-0.171px">0508615499077000000000</div><div class="c" style="left:1398px;word-spacing:1.6px;letter-spacing:-0.854px">Pasal 21</div></div>

<div class="abs vl" style="left:396px"></div><div class="abs vl" style="left:483px"></div><div class="abs vl" style="left:757px"></div><div class="abs vl" style="left:951px"></div><div class="abs vl" style="left:1121px"></div><div class="abs vl" style="left:1291px"></div><div class="abs vl" style="left:1480.5px"></div><div class="abs vl" style="left:1734px"></div>
<div class="abs hl" style="left:396px"></div><div class="abs hl" style="left:483px"></div><div class="abs hl" style="left:757px"></div><div class="abs hl" style="left:951px"></div><div class="abs hl" style="left:1121px"></div><div class="abs hl" style="left:1291px"></div><div class="abs hl" style="left:1480.5px"></div><div class="abs hl" style="left:1734px"></div>

<div class="t th" style="left:490px;letter-spacing:-0.103px">Masa Awal Periode Penghasilan</div>
<div class="t th" style="left:765px;letter-spacing:-0.057px">Masa Akhir Periode Penghasilan...</div>
<div class="t th" style="left:958px;letter-spacing:0.098px">Nomor Pemotongan</div>
<div class="t th" style="left:1127.7px;letter-spacing:-0.056px">Status</div>
<div class="t th" style="left:1297.7px;letter-spacing:-0.067px">Status Tanda Tangan Elektronik...</div>
<div class="t th" style="left:1487.3px;letter-spacing:0.009px">NITKU/Nomor Identitas Sub Unit Organisasi</div>
<div class="t th" style="left:1741.5px;letter-spacing:-0.276px">Jenis Pajak</div>
<svg class="abs srt" style="left:654.5px"><use href="#sort"/></svg>
<svg class="abs srt" style="left:1067px"><use href="#sort"/></svg>
<svg class="abs srt" style="left:1715px"><use href="#sort"/></svg>
<svg class="abs srt" style="left:1802px"><use href="#sort"/></svg>

<!-- filter row -->
<div class="abs" style="left:363.3px;top:290.5px;width:9.7px;height:9.7px;border:1px solid #d4d6d9;border-radius:1.5px;background:#fff"></div>
<div class="abs inp" style="left:490px;width:234px"></div>
<div class="t" style="left:505.5px;top:289.8px;font-size:10.67px;color:#777;letter-spacing:-0.160px">Pilih Masa Awal Periode Penghasilan</div>
<svg class="abs chv" style="left:698.5px"><use href="#chev"/></svg>
<div class="abs inp" style="left:765px;width:152.5px"></div>
<div class="t" style="left:779.3px;top:289.8px;font-size:10.67px;color:#222;letter-spacing:-0.127px">Desember 2025</div>
<svg class="abs" style="left:881.5px;top:289.6px" width="9" height="9" viewBox="0 0 9 9"><path d="M0.8 0.8 L8.2 8.2 M8.2 0.8 L0.8 8.2" stroke="#666" stroke-width="1"/></svg>
<svg class="abs chv" style="left:892px"><use href="#chev"/></svg>
<svg class="abs" style="left:927.5px;top:288.3px" width="13" height="13" viewBox="0 0 13 13"><path d="M1 1.5 H10.6 L7.4 5.8 V11.6 L4.6 10.4 V5.8 Z" fill="none" stroke="#666" stroke-width="1" stroke-linejoin="round"/><path d="M3.4 0.6 L9.6 8.4" stroke="#666" stroke-width="1"/><path d="M9 0.4 L12 2.6" stroke="#666" stroke-width=".9"/></svg>
<div class="abs inp" style="left:958px;width:102.6px"></div>
<svg class="abs fl" style="left:1071.5px"><use href="#funnel"/></svg>
<div class="abs inp" style="left:1127.7px;width:130px"></div>
<div class="t" style="left:1143.3px;top:289.8px;font-size:10.67px;color:#777;letter-spacing:-0.165px">Pilih Status</div>
<svg class="abs chv" style="left:1231.5px"><use href="#chev"/></svg>
<div class="abs inp" style="left:1298.3px;width:121px"></div>
<svg class="abs fl" style="left:1430.8px"><use href="#funnel"/></svg>
<div class="abs inp" style="left:1487.3px;width:186px"></div>
<svg class="abs fl" style="left:1684.8px"><use href="#funnel"/></svg>
<div class="abs inp" style="left:1741.7px;width:101.6px"></div>
<svg class="abs fl" style="left:1854.5px"><use href="#funnel"/></svg>

<!-- tooltip -->
<div class="abs" style="left:353px;top:241px;width:0;height:0;border-left:3px solid transparent;border-right:3px solid transparent;border-bottom:3px solid #434957"></div>
<div class="abs" style="left:333px;top:244px;width:44.8px;height:25.6px;border-radius:2.5px;background:#434957;box-shadow:0 1px 4px rgba(0,0,0,.45)"></div>
<div class="t" style="left:338.2px;top:251.8px;font-size:10.67px;color:#fff;letter-spacing:-0.369px">Refresh</div>

</div>
<div id="vscroll" class="abs"></div>
<div class="abs" style="left:1908.3px;top:139px;width:8.7px;height:369.5px;border-radius:4.4px;background:#8b8b8b"></div>
<svg class="abs" style="left:1908px;top:126px" width="10" height="7" viewBox="0 0 10 7"><path d="M0.4 6.6 L5 0.4 L9.6 6.6 Z" fill="#8b8b8b"/></svg>
<svg class="abs" style="left:1908px;top:1019.5px" width="10" height="7" viewBox="0 0 10 7"><path d="M0.4 0.4 L5 6.6 L9.6 0.4 Z" fill="#8b8b8b"/></svg>


<!-- ================= TASKBAR ================= -->
<div id="taskbar" class="abs"></div>
<!-- weather -->
<svg class="abs" style="left:18px;top:1047px" width="24" height="22" viewBox="0 0 24 22"><path d="M1.5 11 Q2.5 2.5 11.5 2.5 Q20.5 2.5 21.5 11 Q19 9.2 16.5 11 Q14 9.2 11.5 11 Q9 9.2 6.5 11 Q4 9.2 1.5 11 Z" fill="#7db9ee"/><path d="M11.5 2.5 Q6.5 5 6.5 11 Q9 9.2 11.5 11 Z" fill="#a5d3f7"/><path d="M11.5 11 V17.2 Q11.5 19.4 9.6 19.4 Q7.8 19.4 7.8 17.4" fill="none" stroke="#a98a92" stroke-width="1.5" stroke-linecap="round"/></svg>
<div class="abs" style="left:30px;top:1039px;width:16px;height:16px;border-radius:50%;background:#f2909b"></div>
<div class="t" style="left:34.3px;top:1041.2px;font-size:11.5px;color:#1b1b1b">4</div>
<div class="t" style="left:50.4px;top:1041.7px;font-size:11.6px;color:#fff;letter-spacing:0.323px">Hujan ringan</div>
<div class="t" style="left:50.4px;top:1057.9px;font-size:11.6px;color:#cfcfcf;letter-spacing:-0.234px">Besok</div>
<!-- start -->
<svg class="abs" style="left:638.5px;top:1044.5px" width="24" height="24" viewBox="0 0 24 24"><defs><linearGradient id="wg" x1="0" y1="0" x2="1" y2="1"><stop offset="0" stop-color="#6fd3ff"/><stop offset="1" stop-color="#1490e0"/></linearGradient></defs><rect x="0" y="0" width="11.2" height="11.2" rx="1" fill="url(#wg)"/><rect x="12.6" y="0" width="11.2" height="11.2" rx="1" fill="url(#wg)"/><rect x="0" y="12.6" width="11.2" height="11.2" rx="1" fill="url(#wg)"/><rect x="12.6" y="12.6" width="11.2" height="11.2" rx="1" fill="url(#wg)"/></svg>
<!-- search pill -->
<div class="abs" style="left:674.5px;top:1040px;width:220.5px;height:32px;border-radius:16px;background:linear-gradient(90deg,#453d3a,#4a403a 60%,#4d4038);box-shadow:inset 0 0 0 1px rgba(255,255,255,.05)"></div>
<svg class="abs" style="left:685px;top:1047px" width="18" height="18" viewBox="0 0 18 18"><circle cx="7.6" cy="7.8" r="5.6" fill="none" stroke="#ececec" stroke-width="1.7"/><path d="M11.8 12.2 L15.6 16.2" stroke="#ececec" stroke-width="1.9" stroke-linecap="round"/></svg>
<div class="t" style="left:712px;top:1049px;font-size:13.6px;color:#ececec;letter-spacing:-0.256px">Search</div>
<!-- zebra -->
<svg class="abs" style="left:845px;top:1042px" width="44" height="28" viewBox="0 0 44 28"><ellipse cx="23" cy="24.4" rx="20" ry="2.8" fill="#e6cfa6"/><path d="M5 9 L9 3 L12.5 2.2 L14 6 L26 7.4 Q32 7.6 32.5 12 L32 23.6 H30 L29.2 16.6 L18.4 16.4 L18 23.6 H16 L14.6 14.6 Q11 12.8 10.2 9.2 L6.8 11.4 Z" fill="#cfcbd6"/><path d="M12.5 2.2 L11 7 M14.8 6.4 L13.4 11.8 M18 7 L17 16 M21.4 7.2 L20.6 16.2 M24.8 7.4 L24.4 16.4 M28.2 7.8 L28 16.6 M31 9.4 L30.6 20 M17 18 V23 M31 19 V23" stroke="#3e3a66" stroke-width="1.2" fill="none"/></svg>
<!-- task view -->
<div class="abs" style="left:907px;top:1051.5px;width:16.5px;height:15.8px;border-radius:1.5px;background:#737373"></div>
<div class="abs" style="left:913.5px;top:1044.7px;width:18px;height:16.5px;border-radius:1.5px;background:linear-gradient(135deg,#fff,#e4e0dc)"></div>
<div class="abs" style="left:913.5px;top:1051.5px;width:10px;height:9.7px;background:#c9c9c9"></div>
<!-- explorer -->
<svg class="abs" style="left:950px;top:1044px" width="26" height="24" viewBox="0 0 26 24"><path d="M1 4.4 Q1 2.6 2.8 2.6 H9 L11.6 5 H23.2 Q25 5 25 6.8 V19 H1 Z" fill="#f4b72c"/><path d="M1 8.6 Q1 7.2 2.4 7.2 H23.6 Q25 7.2 25 8.6 V20.6 Q25 22.4 23.2 22.4 H2.8 Q1 22.4 1 20.6 Z" fill="#ffd95a"/><path d="M6 17 Q6 15.2 7.8 15.2 H18.2 Q20 15.2 20 17 V22.4 H6 Z" fill="#1b7fd6"/><rect x="8.6" y="18.6" width="8.8" height="1.6" rx=".8" fill="#0d5fae"/></svg>
<div class="abs" style="left:959.8px;top:1072.2px;width:6px;height:2.6px;border-radius:1.3px;background:#9a9a9a"></div>
<!-- edge -->
<svg class="abs" style="left:994px;top:1043.5px" width="26" height="26" viewBox="0 0 26 26"><defs><linearGradient id="eg1" x1="0" y1="0" x2="1" y2="1"><stop offset="0" stop-color="#2fc3e6"/><stop offset=".55" stop-color="#1b7fd6"/><stop offset="1" stop-color="#0d4fa5"/></linearGradient><linearGradient id="eg2" x1="0" y1="0" x2="1" y2="0"><stop offset="0" stop-color="#2bb9e0"/><stop offset="1" stop-color="#5fd068"/></linearGradient></defs><circle cx="13" cy="13" r="12.2" fill="url(#eg1)"/><path d="M2 9.4 Q5 1 13.6 1 Q24.6 1.6 25 12 Q24.8 16.4 20 16.6 Q15.6 16.4 16.4 13.6 Q17.4 11.4 15.2 9.6 Q11.6 7.6 7.6 10.4 Q4.4 13 5.4 18 Q1 15.2 2 9.4 Z" fill="url(#eg2)"/><path d="M10.2 13.4 Q8.6 19.6 14.6 22.8 Q18.6 24 22.6 20 Q17.6 22 14.4 19 Q12.6 16.8 13.8 13.6 Z" fill="#0c3f8c" opacity=".55"/></svg>
<!-- store -->
<svg class="abs" style="left:1038.5px;top:1043.5px" width="25" height="25" viewBox="0 0 25 25"><path d="M8 7 V4.4 Q8 2 10.4 2 H14.6 Q17 2 17 4.4 V7" fill="none" stroke="#3aa0ee" stroke-width="1.8"/><path d="M1 8 Q1 6.4 2.6 6.4 H22.4 Q24 6.4 24 8 V20.8 Q24 24 20.8 24 H4.2 Q1 24 1 20.8 Z" fill="#f4f2f0"/><rect x="7.4" y="10" width="4.4" height="4.4" fill="#f25022"/><rect x="13.2" y="10" width="4.4" height="4.4" fill="#7fba00"/><rect x="7.4" y="15.8" width="4.4" height="4.4" fill="#00a4ef"/><rect x="13.2" y="15.8" width="4.4" height="4.4" fill="#ffb900"/></svg>
<!-- whatsapp -->
<svg class="abs" style="left:1082px;top:1043px" width="27" height="27" viewBox="0 0 27 27"><path d="M13.8 2.4 A10.8 10.8 0 1 1 8.2 22.6 L2.6 24.2 L4.2 18.8 A10.8 10.8 0 0 1 13.8 2.4 Z" fill="#1d2b22" stroke="#2fd166" stroke-width="2.3" stroke-linejoin="round"/><path d="M9.6 7.8 Q10.6 7.2 11.2 8.4 L12 10.2 Q12.2 10.8 11.4 11.6 Q11 12 11.4 12.6 Q12.8 14.8 15 15.8 Q15.6 16 16 15.4 Q16.8 14.4 17.4 14.6 L19.4 15.6 Q20 16 19.6 17 Q18.6 19 16.4 18.6 Q10.6 17.2 8.6 11.2 Q8.2 9 9.6 7.8 Z" fill="#2fd166"/></svg>
<!-- chrome (active) -->
<div class="abs" style="left:1119px;top:1035.5px;width:39.5px;height:40px;border-radius:4px;background:#3a3331;box-shadow:inset 0 0 0 1px rgba(255,255,255,.04)"></div>
<svg class="abs" style="left:1126.5px;top:1043.5px" width="25" height="25" viewBox="0 0 25 25"><circle cx="12.5" cy="12.5" r="12" fill="#fbc116"/><path d="M12.5 12.5 L2.1 6.5 A12 12 0 0 1 22.9 6.5 Z" fill="#e33b2e"/><path d="M12.5 12.5 L2.1 6.5 A12 12 0 0 0 12.5 24.5 L17.4 15.4 Z" fill="#2ca14b"/><path d="M12.5 6.5 H22.9 A12 12 0 0 1 12.5 24.5 L17.7 15.5 Z" fill="#fbc116"/><path d="M12.5 6.5 H22.9 A12 12 0 0 0 2.1 6.5 L7.3 15.5 Z" fill="#e33b2e"/><circle cx="12.5" cy="12.5" r="5.6" fill="#fff"/><circle cx="12.5" cy="12.5" r="4.4" fill="#3b7de9"/></svg>
<div class="abs" style="left:1131.3px;top:1072.5px;width:15.6px;height:2.8px;border-radius:1.4px;background:#55c1f5"></div>
<!-- red circle app -->
<svg class="abs" style="left:1171px;top:1043.5px" width="25" height="25" viewBox="0 0 25 25"><circle cx="12.5" cy="12.5" r="12" fill="#e8394f"/><path d="M7.4 18.8 L12.5 5.8 L17.6 18.8" fill="none" stroke="#fff" stroke-width="2.5" stroke-linejoin="miter"/></svg>
<!-- anydesk -->
<div class="abs" style="left:1215.3px;top:1044.2px;width:24px;height:24px;background:#ef443b"></div>
<svg class="abs" style="left:1218px;top:1050px" width="19" height="12" viewBox="0 0 19 12"><path d="M6.4 0.6 L11.8 6 L6.4 11.4 L1 6 Z" fill="#fff"/><path d="M11.2 0.6 L16.6 6 L11.2 11.4 L9.6 9.8 L13.4 6 L9.6 2.2 Z" fill="#fff"/></svg>
<!-- excel -->
<svg class="abs" style="left:1257.5px;top:1044px" width="24" height="24" viewBox="0 0 24 24"><rect x="5" y="1" width="18" height="21" rx="2" fill="#1f9d55"/><rect x="5" y="1" width="9" height="7" fill="#35b56a"/><rect x="14" y="1" width="9" height="7" rx="1" fill="#4fd07f"/><rect x="14" y="8" width="9" height="7" fill="#1a8a48"/><rect x="5" y="15" width="18" height="7" rx="1.5" fill="#136b38"/><rect x="0.6" y="9" width="11.4" height="11.4" rx="1.6" fill="#137b40"/><path d="M3.8 11.8 L8.8 17.6 M8.8 11.8 L3.8 17.6" stroke="#fff" stroke-width="1.5"/></svg>
<div class="abs" style="left:1268px;top:1072.2px;width:6px;height:2.6px;border-radius:1.3px;background:#9a9a9a"></div>
<!-- tray -->
<svg class="abs" style="left:1695.5px;top:1051px" width="13" height="9" viewBox="0 0 13 9"><path d="M1.4 7 L6.5 1.9 L11.6 7" fill="none" stroke="#f2f2f2" stroke-width="1.4" stroke-linecap="round" stroke-linejoin="round"/></svg>
<svg class="abs" style="left:1725px;top:1047.5px" width="18" height="17" viewBox="0 0 18 17"><path d="M4.6 13 Q1 13 1 9.8 Q1 7 3.8 6.6 Q4.8 3.4 8 3.4 Q10.6 3.4 11.8 5.8 Q16.6 5.6 16.8 9.6 Q16.8 13 13.4 13 Z" fill="#7f7f7f"/><path d="M2.4 1.2 L15.4 15.4" stroke="#c8c8c8" stroke-width="1.2"/></svg>
<svg class="abs" style="left:1757.5px;top:1047.5px" width="18" height="18" viewBox="0 0 18 18"><path d="M10.6 2 H1.2 V12 H12.4" fill="none" stroke="#f2f2f2" stroke-width="1.2"/><path d="M6.6 12 V15.4 M3.6 15.6 H10.4" stroke="#f2f2f2" stroke-width="1.2"/><rect x="12.6" y="1" width="3.6" height="5" rx=".6" fill="none" stroke="#f2f2f2" stroke-width="1.1"/><path d="M14.4 6 V16.4" stroke="#f2f2f2" stroke-width="1.2"/></svg>
<svg class="abs" style="left:1781.5px;top:1048px" width="18" height="16" viewBox="0 0 18 16"><path d="M1 5.6 H3.6 L7.4 2 V14 L3.6 10.4 H1 Z" fill="none" stroke="#f2f2f2" stroke-width="1.15" stroke-linejoin="round"/><path d="M9.8 5.4 Q11.2 8 9.8 10.6 M12 3.6 Q14.4 8 12 12.4 M14.2 1.8 Q17.6 8 14.2 14.2" fill="none" stroke="#f2f2f2" stroke-width="1.15" stroke-linecap="round"/></svg>
<div class="t" style="left:1848.6px;top:1042.3px;font-size:11px;color:#fff;letter-spacing:0.367px">16:10</div>
<div class="t" style="left:1815.6px;top:1058.4px;font-size:11px;color:#fff;letter-spacing:0.771px">31/01/2026</div>
<svg class="abs" style="left:1884.5px;top:1048.5px" width="15" height="16" viewBox="0 0 15 16"><path d="M2 11.4 Q3.2 10 3.2 6.4 Q3.2 1.6 7.5 1.6 Q11.8 1.6 11.8 6.4 Q11.8 10 13 11.4 Z" fill="none" stroke="#f2f2f2" stroke-width="1.15" stroke-linejoin="round"/><path d="M5.8 13.2 Q7.5 14.8 9.2 13.2" fill="none" stroke="#f2f2f2" stroke-width="1.15"/></svg>


</body>
</html>
